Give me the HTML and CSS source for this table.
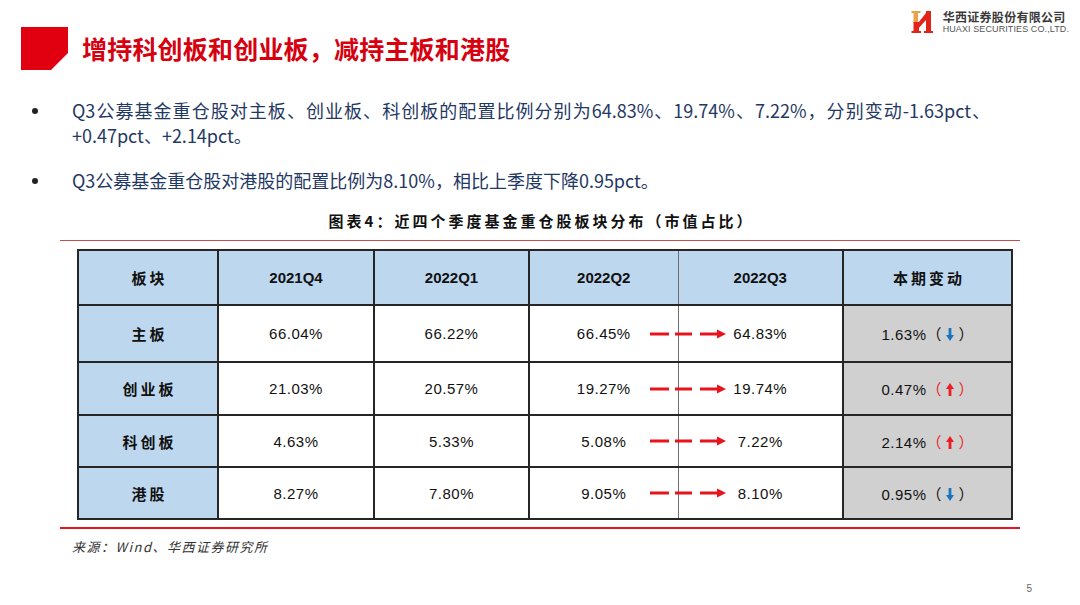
FILE: index.html
```html
<!DOCTYPE html>
<html lang="zh-CN">
<head>
<meta charset="utf-8">
<title>增持科创板和创业板，减持主板和港股</title>
<link rel="stylesheet" href="styles.css">
</head>
<body>
<div class="slide">
  <header class="top">
    <div class="title-group">
      <svg class="title-mark" width="47" height="43" viewBox="0 0 47 43"><polygon points="0,0 47,0 47,26 30,43 0,43" fill="#e0000f"/></svg>
      <h1 class="title">增持科创板和创业板，减持主板和港股</h1>
    </div>
    <div class="logo">
      <svg class="logo-mark" width="22" height="23" viewBox="0 0 22 23">
        <rect x="0.5" y="1" width="9" height="2" fill="#e9a24a"/>
        <rect x="2.5" y="3" width="4.5" height="10" fill="#e9a24a"/>
        <rect x="2.5" y="12" width="5.5" height="10" fill="#e2231a"/>
        <rect x="0.5" y="21" width="9.5" height="2" fill="#e2231a"/>
        <polygon points="7,13 15,3 15,10 7,19" fill="#e2231a"/>
        <rect x="15" y="1" width="5" height="22" fill="#e2231a"/>
        <rect x="13" y="21" width="9" height="2" fill="#e2231a"/>
      </svg>
      <div class="logo-text">
        <div class="logo-cn">华西证券股份有限公司</div>
        <div class="logo-en">HUAXI SECURITIES CO.,LTD.</div>
      </div>
    </div>
  </header>

  <ul class="points">
    <li><span class="dot"><i></i></span><span class="point-text">Q3公募基金重仓股对主板、创业板、科创板的配置比例分别为64.83%、19.74%、7.22%，分别变动-1.63pct、+0.47pct、+2.14pct。</span></li>
    <li><span class="dot"><i></i></span><span class="point-text">Q3公募基金重仓股对港股的配置比例为8.10%，相比上季度下降0.95pct。</span></li>
  </ul>

  <div class="caption">图表4：近四个季度基金重仓股板块分布（市值占比）</div>
  <div class="rule rule-top"></div>

  <table class="data">
    <colgroup>
      <col class="c1"><col class="c2"><col class="c3"><col class="c4"><col class="c5"><col class="c6">
    </colgroup>
    <thead>
      <tr class="r-head">
        <th class="cn">板块</th>
        <th>2021Q4</th>
        <th>2022Q1</th>
        <th class="q2">2022Q2</th>
        <th class="q3">2022Q3</th>
        <th class="cn">本期变动</th>
      </tr>
    </thead>
    <tbody>
      <tr class="r1">
        <td class="label">主板</td>
        <td>66.04%</td>
        <td>66.22%</td>
        <td class="q2">66.45%<svg class="flow" width="76" height="10" viewBox="0 0 76 10"><rect x="0" y="3.5" width="19" height="3" fill="#e8141b"/><rect x="25" y="3.5" width="17" height="3" fill="#e8141b"/><rect x="50" y="3.5" width="19" height="3" fill="#e8141b"/><polygon points="67,0.5 76,5 67,9.5" fill="#e8141b"/></svg></td>
        <td class="q3">64.83%</td>
        <td class="chg">1.63%<span class="paren">（</span><svg class="dir" width="8" height="13" viewBox="0 0 8 13"><rect x="2.6" y="0" width="2.8" height="8" fill="#1b75bc"/><polygon points="0,7 8,7 4,13" fill="#1b75bc"/></svg><span class="paren">）</span></td>
      </tr>
      <tr class="r2">
        <td class="label">创业板</td>
        <td>21.03%</td>
        <td>20.57%</td>
        <td class="q2">19.27%<svg class="flow" width="76" height="10" viewBox="0 0 76 10"><rect x="0" y="3.5" width="19" height="3" fill="#e8141b"/><rect x="25" y="3.5" width="17" height="3" fill="#e8141b"/><rect x="50" y="3.5" width="19" height="3" fill="#e8141b"/><polygon points="67,0.5 76,5 67,9.5" fill="#e8141b"/></svg></td>
        <td class="q3">19.74%</td>
        <td class="chg">0.47%<span class="paren up">（</span><svg class="dir" width="8" height="13" viewBox="0 0 8 13"><polygon points="4,0 8,6 0,6" fill="#ee1c25"/><rect x="2.6" y="5" width="2.8" height="8" fill="#ee1c25"/></svg><span class="paren up">）</span></td>
      </tr>
      <tr class="r3">
        <td class="label">科创板</td>
        <td>4.63%</td>
        <td>5.33%</td>
        <td class="q2">5.08%<svg class="flow" width="76" height="10" viewBox="0 0 76 10"><rect x="0" y="3.5" width="19" height="3" fill="#e8141b"/><rect x="25" y="3.5" width="17" height="3" fill="#e8141b"/><rect x="50" y="3.5" width="19" height="3" fill="#e8141b"/><polygon points="67,0.5 76,5 67,9.5" fill="#e8141b"/></svg></td>
        <td class="q3">7.22%</td>
        <td class="chg">2.14%<span class="paren up">（</span><svg class="dir" width="8" height="13" viewBox="0 0 8 13"><polygon points="4,0 8,6 0,6" fill="#ee1c25"/><rect x="2.6" y="5" width="2.8" height="8" fill="#ee1c25"/></svg><span class="paren up">）</span></td>
      </tr>
      <tr class="r4">
        <td class="label">港股</td>
        <td>8.27%</td>
        <td>7.80%</td>
        <td class="q2">9.05%<svg class="flow" width="76" height="10" viewBox="0 0 76 10"><rect x="0" y="3.5" width="19" height="3" fill="#e8141b"/><rect x="25" y="3.5" width="17" height="3" fill="#e8141b"/><rect x="50" y="3.5" width="19" height="3" fill="#e8141b"/><polygon points="67,0.5 76,5 67,9.5" fill="#e8141b"/></svg></td>
        <td class="q3">8.10%</td>
        <td class="chg">0.95%<span class="paren">（</span><svg class="dir" width="8" height="13" viewBox="0 0 8 13"><rect x="2.6" y="0" width="2.8" height="8" fill="#1b75bc"/><polygon points="0,7 8,7 4,13" fill="#1b75bc"/></svg><span class="paren">）</span></td>
      </tr>
    </tbody>
  </table>

  <div class="rule rule-bottom"></div>
  <div class="source">来源：Wind、华西证券研究所</div>
  <div class="page-no">5</div>
</div>
</body>
</html>
```

FILE: styles.css
```css
* { box-sizing: border-box; }

html, body {
  margin: 0;
  padding: 0;
  background: #ffffff;
}

body {
  font-family: "Noto Sans CJK SC", "Noto Sans", sans-serif;
  color: #111;
}

.slide {
  width: 1080px;
  height: 605px;
  overflow: hidden;
  background: #fff;
}

/* header */
.top {
  display: flex;
  align-items: flex-start;
  height: 70px;
}

.title-group {
  display: flex;
  align-items: center;
  gap: 14px;
  margin-top: 27px;
  margin-left: 21px;
  height: 43px;
}

.title-mark { display: block; flex: 0 0 auto; }

.title {
  margin: 0;
  font-size: 25px;
  line-height: 43px;
  font-weight: 700;
  color: #d7000f;
  letter-spacing: 0.2px;
  white-space: nowrap;
}

.logo {
  margin-left: auto;
  margin-top: 10px;
  margin-right: 11px;
  display: flex;
  align-items: flex-start;
  gap: 10px;
}

.logo-mark { display: block; }

.logo-cn {
  font-size: 12px;
  line-height: 14px;
  font-weight: 700;
  color: #3a3a3a;
  letter-spacing: 0.3px;
  white-space: nowrap;
}

.logo-en {
  font-family: "Liberation Sans", Arial, sans-serif;
  font-size: 9px;
  line-height: 10px;
  color: #555;
  letter-spacing: 0.1px;
  white-space: nowrap;
}

/* bullet points */
.points {
  list-style: none;
  margin: 28px 0 0 0;
  padding: 0 0 0 32px;
}

.points li {
  display: flex;
  align-items: flex-start;
  font-size: 18px;
  line-height: 25px;
  color: #1f3864;
}

.points li + li { margin-top: 20px; }

.dot {
  flex: 0 0 40px;
  height: 25px;
  display: flex;
  align-items: center;
}

.dot i {
  display: block;
  width: 6px;
  height: 6px;
  border-radius: 50%;
  background: #222;
}

.point-text {
  flex: 0 0 918px;
  text-align: justify;
}

/* caption */
.caption {
  margin-top: 18px;
  font-size: 15px;
  line-height: 20px;
  font-weight: 700;
  letter-spacing: 3px;
  padding-left: 3px;
  text-align: center;
  color: #111;
}

.rule { margin-left: 60px; margin-right: 60px; }

.rule-top {
  margin-top: 9px;
  height: 1px;
  background: #c0504d;
}

.rule-bottom {
  margin-top: 7px;
  height: 2px;
  background: #e8141b;
}

/* table */
.data {
  margin: 8px 0 0 77px;
  width: 934px;
  border-collapse: collapse;
  table-layout: fixed;
  font-family: "Liberation Sans", Arial, sans-serif;
  font-size: 15px;
  letter-spacing: 0.5px;
  color: #111;
}

.c1 { width: 140px; }
.c2 { width: 156px; }
.c3 { width: 155px; }
.c4 { width: 149px; }
.c5 { width: 165px; }
.c6 { width: 169px; }

.data th,
.data td {
  border: 2px solid #262626;
  padding: 0;
  text-align: center;
  vertical-align: middle;
  white-space: nowrap;
}

.data th {
  background: #bdd7ee;
  font-weight: 700;
  letter-spacing: 0;
}

.data th.cn {
  font-family: "Noto Sans CJK SC", sans-serif;
  letter-spacing: 3px;
  padding-left: 3px;
}

.data .q2 { border-right: 1px solid #6e6e6e; position: relative; }
.data .q3 { border-left: 1px solid #6e6e6e; }

.r-head { height: 55px; }
.r1 { height: 57px; }
.r2 { height: 53px; }
.r3 { height: 52px; }
.r4 { height: 52px; }

.data td.label {
  background: #bdd7ee;
  font-family: "Noto Sans CJK SC", sans-serif;
  font-weight: 700;
  letter-spacing: 3px;
  padding-left: 3px;
}

.data td.chg {
  background: #d0d0d0;
}

.flow {
  position: absolute;
  left: 120px;
  top: 50%;
  margin-top: -5px;
  z-index: 2;
}

.paren {
  font-family: "Noto Sans CJK SC", sans-serif;
  font-size: 15px;
  letter-spacing: 0;
  color: #111;
}

.paren.up { color: #ee1c25; }

.dir {
  display: inline-block;
  vertical-align: middle;
  margin: -3px 5px 0 4px;
}

/* footer */
.source {
  margin: 9px 0 0 72px;
  font-size: 13px;
  line-height: 18px;
  font-style: italic;
  letter-spacing: 1.5px;
  color: #333;
}

.page-no {
  margin-top: 27px;
  padding-right: 48px;
  text-align: right;
  font-family: "Liberation Sans", Arial, sans-serif;
  font-size: 10px;
  line-height: 12px;
  color: #666;
}
```
